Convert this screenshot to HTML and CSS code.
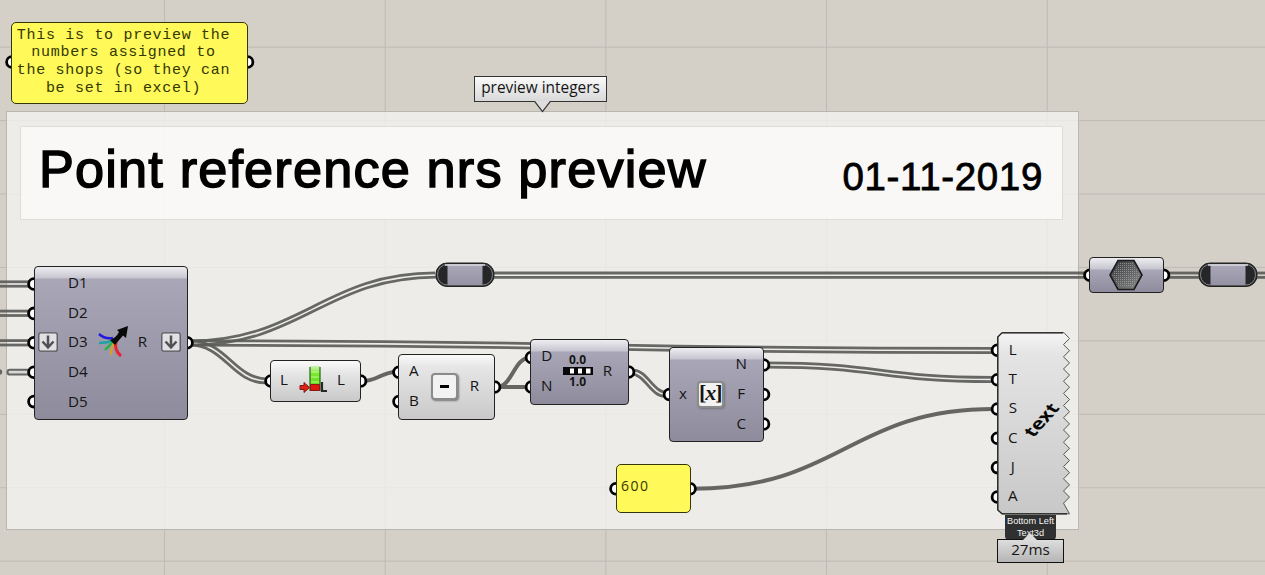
FILE: index.html
```
<!DOCTYPE html>
<html lang="en">
<head>
<meta charset="utf-8">
<title>Point reference nrs preview</title>
<link rel="stylesheet" href="styles.css">
</head>
<body>
<main class="canvas">
  <section class="group">
    <header class="banner">
      <h1 class="banner-title">Point reference nrs preview</h1>
      <span class="banner-date">01-11-2019</span>
    </header>
  </section>

  <svg class="layer" width="1265" height="575" viewBox="0 0 1265 575">
    <defs>
      <path id="w1" d="M0 284H30"/><path id="w2" d="M0 313.3H30"/><path id="w3" d="M0 342.8H30"/>
      <path id="w4" d="M190 343C300 343 326 275 436 275"/>
      <path id="w5" d="M190 343C226 343 233 381 267 381"/>
      <path id="w6" d="M190 343C590 343 593 350.5 993 350.5"/>
      <path id="w7" d="M632 372C646 372 652 394.500 666 394.500"/>
      <path id="w8" d="M767 365C880 365 880 379.500 993 379.500"/>
      <path id="w9" d="M494 275.200H1088"/><path id="w10" d="M1167 275.200H1199"/><path id="w11" d="M1257 275.200H1265"/>
    </defs>
    <g class="wire double">
      <g transform="translate(0 -2.200)"><use href="#w1"/><use href="#w2"/><use href="#w3"/><use href="#w6"/><use href="#w8"/><use href="#w9"/><use href="#w10"/><use href="#w11"/></g>
      <g transform="translate(0 2.200)"><use href="#w1"/><use href="#w2"/><use href="#w3"/><use href="#w6"/><use href="#w8"/><use href="#w9"/><use href="#w10"/><use href="#w11"/></g>
      <g transform="translate(-.7 -2.100)"><use href="#w4"/></g><g transform="translate(.7 2.100)"><use href="#w4"/></g>
      <g transform="translate(1.200 -1.900)"><use href="#w5"/><use href="#w7"/></g><g transform="translate(-1.200 1.900)"><use href="#w5"/><use href="#w7"/></g>
    </g>
    <rect class="dash" x="7.500" y="369.800" width="22" height="4.800" rx="2.400"/>
    <circle cx="-.5" cy="372" r="2.800" fill="#666"/>
    <g class="wire single">
      <path d="M363 381C377 381 382 372 396 372"/>
      <path d="M497 387C512 387 514 358 529 358"/>
      <path d="M497 387H529"/>
      <path d="M692 488.700C840 488.700 850 409 994 409"/>
    </g>
    <g class="grips">
      <circle cx="12" cy="62" r="5.400"/><circle cx="247.500" cy="62" r="5.400"/>
      <circle cx="34" cy="284" r="5.400"/><circle cx="34" cy="313.400" r="5.400"/><circle cx="34" cy="342.800" r="5.400"/><circle cx="34" cy="372.200" r="5.400"/><circle cx="34" cy="401.600" r="5.400"/>
      <circle cx="187" cy="342.800" r="5.400"/>
      <circle cx="271" cy="381" r="5.400"/><circle cx="360.500" cy="381" r="5.400"/>
      <circle cx="399" cy="372.200" r="5.400"/><circle cx="399" cy="401.600" r="5.400"/><circle cx="494.500" cy="387" r="5.400"/>
      <circle cx="531.500" cy="357.500" r="5.400"/><circle cx="531.500" cy="387" r="5.400"/><circle cx="628.500" cy="372" r="5.400"/>
      <circle cx="669.500" cy="394.500" r="5.400"/><circle cx="763.500" cy="365" r="5.400"/><circle cx="763.500" cy="394.500" r="5.400"/><circle cx="763.500" cy="424" r="5.400"/>
      <circle cx="616" cy="488.700" r="5.400"/><circle cx="690" cy="488.700" r="5.400"/>
      <circle cx="997.500" cy="350.300" r="5.400"/><circle cx="997.500" cy="379.700" r="5.400"/><circle cx="997.500" cy="409" r="5.400"/><circle cx="997.500" cy="438.300" r="5.400"/><circle cx="997.500" cy="467.600" r="5.400"/><circle cx="997.500" cy="497" r="5.400"/>
      <circle cx="1090" cy="275.200" r="5.400"/><circle cx="1163.500" cy="275.200" r="5.400"/>
    </g>
  </svg>

  <div class="panel note">This is to preview the<br>numbers assigned to<br>the shops (so they can<br>be set in excel)</div>
  <div class="panel value">600</div>

  <div class="callout preview-tag">preview integers
    <svg class="pointer" width="18" height="12" viewBox="0 0 18 12"><path class="tag-fill" d="M1 0L8.500 10.500L16 0Z"/><path d="M1 .8L8.500 10.500L16 .8" fill="none" stroke="#333" stroke-width="1.200"/></svg>
  </div>

  <article class="node violet merge">
    <svg class="arrow-btn" viewBox="0 0 20 20"><rect x=".8" y=".8" width="18.400" height="18.400" rx="2"/><path d="M10 3.500V15M4.500 9.500L10 15.500L15.500 9.500"/></svg>
    <div class="ports"><span>D1</span><span>D2</span><span>D3</span><span>D4</span><span>D5</span></div>
    <svg class="merge-icon" width="34" height="36" viewBox="0 0 34 36">
      <g fill="none" stroke-width="2.400">
        <path d="M2 9Q8 14.500 16 13" stroke="#2418df"/><path d="M2 18Q9 18 15 16" stroke="#19a6a0"/>
        <path d="M8 25Q12 21 16 17" stroke="#20b447"/><path d="M14 30Q14 23 17 18" stroke="#d5a126"/><path d="M24 31Q17 25 19 17" stroke="#e92434" stroke-width="3"/>
      </g>
      <path d="M13 15Q19 13 22 7L20 5L31 1L29 13L26 10.500Q22 15 18 20Z" fill="#080808"/>
    </svg>
    <div class="ports"><span>R</span></div>
    <svg class="arrow-btn" viewBox="0 0 20 20"><rect x=".8" y=".8" width="18.400" height="18.400" rx="2"/><path d="M10 3.500V15M4.500 9.500L10 15.500L15.500 9.500"/></svg>
  </article>

  <article class="node grey length">
    <div class="ports"><span>L</span></div>
    <svg class="length-icon" width="30" height="30" viewBox="0 0 30 30">
      <defs><linearGradient id="bar" x2="0" y2="1"><stop stop-color="#a8f070" stop-opacity=".5"/><stop offset=".3" stop-color="#7ee833"/><stop offset="1" stop-color="#55cf12"/></linearGradient></defs>
      <rect x="12" y="1" width="10" height="25" fill="url(#bar)"/><path d="M12 2V26M22 2V26" stroke="#2b7420" stroke-width="1.300"/><path d="M13 7H21M13 12H21M13 17H21" stroke="#b9fa80" stroke-width="1.200"/>
      <path d="M12.500 19.500H21.500V25.500H12.500Z" fill="#df1710" stroke="#8b1812"/><path d="M2 20.500H6V17.500L11.500 22.500L6 27.500V24.500H2Z" fill="#df2119" stroke="#841913"/><path d="M24 17V26H29" fill="none" stroke="#282828" stroke-width="2.200"/>
    </svg>
    <div class="ports"><span>L</span></div>
  </article>

  <article class="node grey subtract">
    <div class="ports"><span>A</span><span>B</span></div>
    <div class="tile"><i class="minus"></i></div>
    <div class="ports"><span>R</span></div>
  </article>

  <article class="node violet range">
    <div class="ports"><span>D</span><span>N</span></div>
    <div class="range-icon"><b>0.0</b><svg width="30" height="8" viewBox="0 0 30 8"><rect width="30" height="8" fill="#080808"/><path d="M7 1.500H11V6.500H7ZM15 1.500H19V6.500H15ZM23 1.500H27.500V6.500H23Z" fill="#fff"/></svg><b>1.0</b></div>
    <div class="ports"><span>R</span></div>
  </article>

  <article class="node violet evaluate">
    <div class="ports"><span>x</span></div>
    <div class="tile bracket"><b>[<em>x</em>]</b></div>
    <div class="ports"><span>N</span><span>F</span><span>C</span></div>
  </article>

  <svg class="relay relay-a" width="60" height="26" viewBox="0 0 60 26"><use href="#relay"/></svg>
  <svg class="relay relay-b" width="60" height="26" viewBox="0 0 60 26"><use href="#relay"/></svg>
  <svg width="0" height="0" class="symbols">
    <defs>
      <linearGradient id="violet" x2="0" y2="1"><stop stop-color="#aaa8b9"/><stop offset="1" stop-color="#9492a3"/></linearGradient>
      <linearGradient id="grey" x2="0" y2="1"><stop stop-color="#f5f5f5"/><stop offset=".12" stop-color="#e4e4e4"/><stop offset="1" stop-color="#c8c8c8"/></linearGradient>
      <pattern id="mesh" width="2" height="2" patternUnits="userSpaceOnUse"><rect width="1" height="1" fill="#aaa"/></pattern>
      <linearGradient id="hex" x2="1" y2="1"><stop stop-color="#343638"/><stop offset="1" stop-color="#8a8a8a"/></linearGradient>
      <g id="relay"><rect x="1" y="1" width="58" height="23.500" rx="11" fill="#252628" stroke="#222"/><rect x="2.600" y="2.500" width="54.800" height="20.500" rx="9.500" fill="none" stroke="#85858a"/><rect x="12.500" y="2.500" width="35" height="20.500" fill="url(#violet)"/><path d="M10 3H50" stroke="#d9d9df" stroke-width="1.500"/></g>
    </defs>
  </svg>

  <article class="node violet mesh">
    <svg width="36" height="32" viewBox="0 0 36 32"><path d="M10 1.500H26L34 16L26 30.500H10L2 16Z" fill="url(#hex)" stroke="#1b1b1b" stroke-width="1.600"/><path d="M11 4H25L32 16L25 28H11L4 16Z" fill="url(#mesh)" opacity=".65"/></svg>
  </article>

  <article class="text3d">
    <svg class="torn" width="76" height="184" viewBox="0 0 76 184">
      <path d="M5 .7H67L72.500 6.500L66.500 12.600L72.500 18.700L66.500 24.800L72.500 30.900L66.500 37L72.500 43.100L66.500 49.200L72.500 55.300L66.500 61.400L72.500 67.500L66.500 73.600L72.500 79.700L66.500 85.800L72.500 91.900L66.500 98L72.500 104.100L66.500 110.200L72.500 116.300L66.500 122.400L72.500 128.500L66.500 134.600L72.500 140.700L66.500 146.800L72.500 152.900L66.500 159L72.500 165.100L66.500 171.200L72.500 181.800H5L.7 178V5Z" fill="url(#grey)" stroke="#555" stroke-width="1"/>
      <path d="M66 .8H5L.8 5V178L5 181.800H70" fill="none" stroke="#222" stroke-width="1.300"/>
    </svg>
    <div class="ports"><span>L</span><span>T</span><span>S</span><span>C</span><span>J</span><span>A</span></div>
    <b class="text-glyph">text</b>
  </article>

  <div class="footer-tag">Bottom Left<br>Text3d</div>
  <div class="callout timing">27ms
    <svg class="pointer-up" width="18" height="9" viewBox="0 0 18 9"><path d="M1 9L9 1L17 9Z" fill="#ddd"/></svg>
  </div>
</main>
</body>
</html>
```
FILE: styles.css
```
* { box-sizing: border-box; }
body { margin: 0; }
.canvas {
  position: relative; width: 1265px; height: 575px; overflow: hidden;
  font: 15.2px/1 "Open Sans", "Noto Sans", sans-serif; color: #151515;
  background-color: #d4cfc7;
  background-image: linear-gradient(90deg, #bfbab3 1px, transparent 1px), linear-gradient(#bfbab3 1px, transparent 1px);
  background-size: 220.7px 100%, 100% 73.43px;
  background-position: 164px 0, 0 46.7px;
}
.layer { position: absolute; left: 0; top: 0; }
.group {
  position: absolute; left: 6px; top: 111px; width: 1073px; height: 419px;
  padding: 14px; background: rgba(244,244,242,.76); border: 1px solid #b9b6b0;
}
.banner {
  display: flex; justify-content: space-between; align-items: baseline;
  width: 1043px; height: 94px; padding: 14px 19px 0 18px; margin-left: -1px;
  background: rgba(255,255,255,.64); border: 1px solid #deddda;
  font-family: "Liberation Sans", Arial, sans-serif; color: #000;
}
.banner-title { margin: 0; font-size: 52.3px; line-height: 56px; font-weight: 400; letter-spacing: 1.15px; -webkit-text-stroke: 1.5px #000; white-space: nowrap; }
.banner-date { position: relative; top: 3px; font-size: 38.5px; letter-spacing: .65px; -webkit-text-stroke: .8px #000; }
.wire { fill: none; stroke: #5d5c5a; }
.double { stroke-width: 2.8; stroke-opacity: .93; }
.single { stroke-width: 4; stroke: #666561; }
.dash { fill: #d8d7d2; stroke: #666; stroke-width: 2; }
.grips { fill: #fff; stroke: #000; stroke-width: 2.8; }
.node {
  position: absolute; display: flex; align-items: center;
  border: 1.4px solid #222; border-radius: 4px;
}
.violet { background: linear-gradient(#ededf1 0, #c7c6d0 11px, #a8a6b7 12px, #8e8c9c 100%); }
.grey { background: linear-gradient(#fafafa 0, #e6e6e6 12px, #c9c9c9 100%); }
.ports { display: flex; flex-direction: column; justify-content: space-around; align-self: stretch; padding: 1px 0 3px; }
.ports span { display: flex; flex: 1; align-items: center; justify-content: center; }
.merge { left: 34px; top: 266px; width: 154px; height: 154px; padding-left: 3px; }
.arrow-btn { width: 20px; height: 20px; margin-top: -2px; fill: #e1e1e4; stroke: #55555b; stroke-width: 1.3; }
.arrow-btn path { fill: none; stroke: #505055; stroke-width: 2.5; }
.merge .arrow-btn + .ports { margin-left: 10px; }
.merge-icon { margin: 0 7px 0 9px; }
.merge .ports + .arrow-btn { margin-left: 14px; }
.length { left: 270px; top: 360px; width: 91px; height: 42px; padding: 0 15px 0 9px; justify-content: space-between; }
.length-icon { margin-top: -3px; }
.subtract { left: 398px; top: 354px; width: 97px; height: 66px; padding: 0 15px 0 10px; justify-content: space-between; }
.tile { width: 27px; height: 27px; margin-top: -1px; display: grid; place-items: center; background: #f2f2f2; border: 2px solid #8b8b8b; border-radius: 4px; box-shadow: 1px 1px 2px #777; }
.minus { width: 9px; height: 3px; background: #000; }
.range { left: 530px; top: 339px; width: 99px; height: 66px; padding: 0 16px 0 10px; justify-content: space-between; }
.range-icon { display: flex; flex-direction: column; align-items: center; gap: 1px; margin-top: -3px; font-size: 12px; }
.evaluate { left: 669px; top: 347px; width: 95px; height: 95px; padding: 0 16px 0 9px; justify-content: space-between; }
.bracket { margin-right: 2px; font: 22px/18px "Liberation Serif", serif; }
.bracket b { display: block; margin-top: -3px; white-space: nowrap; letter-spacing: -1px; }
.mesh { left: 1089px; top: 257px; width: 75px; height: 36px; padding-right: 2px; justify-content: center; }
.relay { position: absolute; top: 262px; }
.relay-a { left: 435px; }
.relay-b { left: 1198px; }
.symbols { position: absolute; }
.text3d { position: absolute; left: 997px; top: 332px; width: 76px; height: 183px; display: flex; padding: 2px 0 2px 11px; }
.torn { position: absolute; left: 0; top: 0; }
.text3d .ports { position: relative; }
.text-glyph { position: absolute; left: 24px; top: 76px; font: bold 20px/24px "Noto Sans", sans-serif; transform: rotate(-48deg) skewX(12deg) scaleY(.88); color: #080808; }
.panel { position: absolute; background: #fff95a; border: 1.4px solid #35350d; border-radius: 5px; color: #343800; }
.note { left: 11px; top: 22px; width: 237px; height: 82px; padding: 3.5px 16px 0 4px; text-align: center; white-space: nowrap; font: 15px/17.7px "Liberation Mono", "Courier New", monospace; letter-spacing: .7px; }
.value { left: 616px; top: 464px; width: 75px; height: 49px; padding: 13px 0 0 4px; font-size: 14px; line-height: 16px; letter-spacing: 1.5px; }
.callout { position: absolute; display: flex; align-items: center; justify-content: center; border: 1.4px solid #333; background: linear-gradient(#fafafa, #d9d9d9); white-space: nowrap; padding-bottom: 2px; }
.preview-tag { left: 474px; top: 76px; width: 133px; height: 26px; font-size: 15.4px; }
.pointer { position: absolute; left: 59px; top: 24px; }
.tag-fill { fill: #dedede; }
.timing { left: 997px; top: 539px; width: 67px; height: 24px; background: linear-gradient(#ddd, #b5b5b5); border-color: #111; }
.pointer-up { position: absolute; left: 23px; top: -8px; }
.footer-tag { position: absolute; left: 1005px; top: 515px; width: 51px; height: 26px; border-radius: 0 0 5px 5px; background: #303030; color: #f4f4f4; font: 9.2px/12px "Liberation Sans", sans-serif; text-align: center; white-space: nowrap; }
```
